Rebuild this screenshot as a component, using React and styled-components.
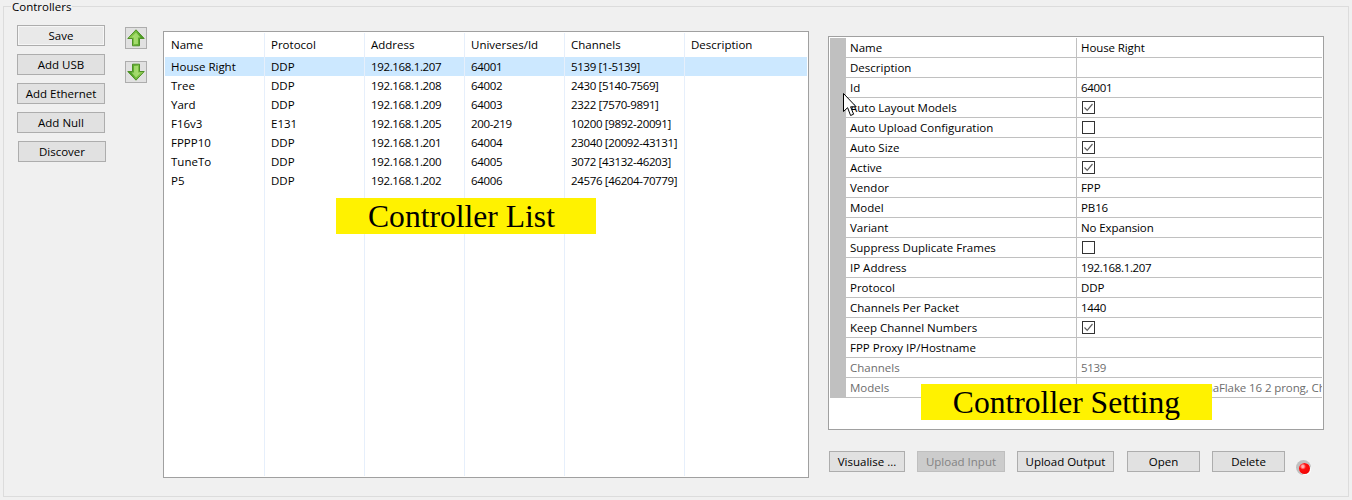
import React from 'react';
import styled, { createGlobalStyle } from 'styled-components';

const controllers = [
  ['House Right', 'DDP', '192.168.1.207', '64001', '5139 [1-5139]'],
  ['Tree', 'DDP', '192.168.1.208', '64002', '2430 [5140-7569]'],
  ['Yard', 'DDP', '192.168.1.209', '64003', '2322 [7570-9891]'],
  ['F16v3', 'E131', '192.168.1.205', '200-219', '10200 [9892-20091]'],
  ['FPPP10', 'DDP', '192.168.1.201', '64004', '23040 [20092-43131]'],
  ['TuneTo', 'DDP', '192.168.1.200', '64005', '3072 [43132-46203]'],
  ['P5', 'DDP', '192.168.1.202', '64006', '24576 [46204-70779]'],
];

const columns = [
  { title: 'Name', width: 100 },
  { title: 'Protocol', width: 100 },
  { title: 'Address', width: 100, numeric: true },
  { title: 'Universes/Id', width: 100, numeric: true },
  { title: 'Channels', width: 120, numeric: true },
  { title: 'Description', width: 122, last: true },
];

const settings = [
  ['Name', 'House Right'],
  ['Description', ''],
  ['Id', '64001'],
  ['Auto Layout Models', true],
  ['Auto Upload Configuration', false],
  ['Auto Size', true],
  ['Active', true],
  ['Vendor', 'FPP'],
  ['Model', 'PB16'],
  ['Variant', 'No Expansion'],
  ['Suppress Duplicate Frames', false],
  ['IP Address', '192.168.1.207'],
  ['Protocol', 'DDP'],
  ['Channels Per Packet', '1440'],
  ['Keep Channel Numbers', true],
  ['FPP Proxy IP/Hostname', ''],
  ['Channels', '5139', true],
  ['Models', 'Chroma Snow 17, ChromaFlake 16 2 prong, Chroma Snow', true],
];

function Arrow({ down }) {
  const id = down ? 'gd' : 'gu';
  const flip = down ? 'rotate(180 9 9)' : undefined;
  return (
    <ArrowButton>
      <svg width="18" height="18" viewBox="0 0 18 18">
        <defs>
          <linearGradient id={id} x1="0" y1="0" x2="1" y2="0">
            <stop offset="0" stopColor="#9bd35c" />
            <stop offset="0.5" stopColor="#6fb93a" />
            <stop offset="1" stopColor="#3a9218" />
          </linearGradient>
        </defs>
        <path
          transform={flip}
          d="M9 0.8 L17.2 9.5 L12.5 9.5 L12.5 16.8 L5.5 16.8 L5.5 9.5 L0.8 9.5 Z"
          fill={`url(#${id})`}
          stroke="#4d8f26"
          strokeWidth="1"
          strokeLinejoin="round"
        />
        <path
          transform={flip}
          d="M9 3.5 L13.5 8.5 L11 8.5 L11 15 L7 15 L7 8.5 L4.5 8.5 Z"
          fill="#c4f08c"
          opacity="0.6"
        />
      </svg>
    </ArrowButton>
  );
}

function Check({ on }) {
  return (
    <CheckBox>
      {on && (
        <svg width="11" height="11" viewBox="0 0 11 11">
          <path d="M1.5 5.5 L4.2 8.3 L9.5 2" fill="none" stroke="#5f5f5f" strokeWidth="1.2" />
        </svg>
      )}
    </CheckBox>
  );
}

export default function App() {
  return (
    <>
      <GlobalStyle />
      <Group>
        <Caption>Controllers</Caption>
        <SideButtons>
          <Button $primary>Save</Button>
          <Button>Add USB</Button>
          <Button>Add Ethernet</Button>
          <Button>Add Null</Button>
          <Button $nudge>Discover</Button>
        </SideButtons>
        <ArrowColumn>
          <Arrow />
          <Arrow down />
        </ArrowColumn>
        <ListBox>
          {columns.map((col, i) => (
            <Column key={col.title} $width={col.width} $last={col.last}>
              <HeaderCell>{col.title}</HeaderCell>
              {controllers.map((row, r) => (
                <Cell key={r} $selected={r === 0} $numeric={col.numeric}>{row[i]}</Cell>
              ))}
            </Column>
          ))}
          <Callout $left={172} $top={166} $width={260} $inset={9}>Controller List</Callout>
        </ListBox>
        <RightPanel>
          <PropertyGrid>
            {settings.map(([label, value, disabled]) => (
              <PropRow key={label}>
                <PropGutter />
                <PropName $disabled={disabled}>{label}</PropName>
                <PropValue $disabled={disabled} $numeric={/^[\d.]+$/.test(value)}>
                  {typeof value === 'boolean' ? <Check on={value} /> : value}
                </PropValue>
              </PropRow>
            ))}
            <Callout $left={92} $top={347} $width={291}>Controller Setting</Callout>
          </PropertyGrid>
          <ActionRow>
            <ActionButton $width={76}>Visualise ...</ActionButton>
            <ActionButton $width={88} disabled>Upload Input</ActionButton>
            <ActionButton $width={97}>Upload Output</ActionButton>
            <ActionButton $width={73} $gap={13}>Open</ActionButton>
            <ActionButton $width={73}>Delete</ActionButton>
            <Led />
          </ActionRow>
        </RightPanel>
        <Cursor width="16" height="25" viewBox="0 0 16 25">
          <path
            d="M0.5 0.5 L0.5 18.5 L4.6 14.7 L7.6 22.5 L10.6 21.2 L7.6 13.8 L13.2 13.8 Z"
            fill="#fff"
            stroke="#000"
            strokeWidth="1"
          />
        </Cursor>
      </Group>
    </>
  );
}

const GlobalStyle = createGlobalStyle`
  html, body {
    margin: 0;
    padding: 0;
    background: #f0f0f0;
    overflow: hidden;
  }
  body {
    font-family: "Open Sans", "Noto Sans", sans-serif;
    font-size: 11.5px;
    color: #000;
  }
`;

const Group = styled.div`
  position: relative;
  box-sizing: border-box;
  display: flex;
  align-items: flex-start;
  width: 1346px;
  height: 491px;
  margin: 6px 3px 0;
  padding: 18px 0 0 13px;
  border: 1px solid #dcdcdc;
`;

const Caption = styled.div`
  position: absolute;
  left: 7px;
  top: -8px;
  padding: 0 1px;
  background: #f0f0f0;
  line-height: 15px;
`;

const SideButtons = styled.div`
  display: flex;
  flex-direction: column;
  gap: 8px;
  width: 89px;
`;

const Button = styled.div`
  box-sizing: border-box;
  display: flex;
  align-items: center;
  justify-content: center;
  width: 88px;
  height: 21px;
  margin-left: ${props => (props.$nudge ? '1px' : '0')};
  border: 1px solid #adadad;
  background: ${props => (props.$primary ? '#e9e9e9' : '#e1e1e1')};
  box-shadow: ${props => (props.$primary ? 'inset 0 0 0 1px #f6f6f6' : 'none')};
`;

const ArrowColumn = styled.div`
  display: flex;
  flex-direction: column;
  gap: 12px;
  margin: 2px 16px 0 19px;
`;

const ArrowButton = styled.div`
  box-sizing: border-box;
  display: flex;
  align-items: center;
  justify-content: center;
  width: 22px;
  height: 22px;
  border: 1px solid #adadad;
  background: #e1e1e1;
`;

const ListBox = styled.div`
  position: relative;
  box-sizing: border-box;
  display: flex;
  width: 646px;
  height: 447px;
  margin-top: 6px;
  padding: 1px;
  border: 1px solid #a0a0a0;
  background: #fff;
`;

const Column = styled.div`
  box-sizing: border-box;
  width: ${props => props.$width}px;
  height: 100%;
  border-right: ${props => (props.$last ? 'none' : '1px solid #e6effb')};
`;

const HeaderCell = styled.div`
  box-sizing: border-box;
  display: flex;
  align-items: center;
  height: 24px;
  padding: 0 0 2px 6px;
  background: #fff;
`;

const Cell = styled.div`
  box-sizing: border-box;
  display: flex;
  align-items: center;
  height: 19px;
  padding-left: 6px;
  background: ${props => (props.$selected ? '#cce8ff' : 'transparent')};
  letter-spacing: ${props => (props.$numeric ? '-0.35px' : '0')};
  white-space: nowrap;
`;

const Callout = styled.div`
  position: absolute;
  box-sizing: border-box;
  left: ${props => props.$left}px;
  top: ${props => props.$top}px;
  width: ${props => props.$width}px;
  height: 36px;
  padding-right: ${props => props.$inset || 0}px;
  background: #fff200;
  color: #000;
  font-family: "Liberation Serif", serif;
  font-size: 31.6px;
  line-height: 38px;
  text-align: center;
  white-space: nowrap;
`;

const RightPanel = styled.div`
  display: flex;
  flex-direction: column;
  margin: 11px 0 0 19px;
`;

const PropertyGrid = styled.div`
  position: relative;
  box-sizing: border-box;
  width: 496px;
  height: 394px;
  padding: 1px;
  border: 1px solid #a0a0a0;
  background: #fff;
`;

const PropRow = styled.div`
  display: flex;
  height: 20px;
`;

const PropGutter = styled.div`
  flex: none;
  width: 16px;
  background: #c0c0c0;
`;

const PropName = styled.div`
  box-sizing: border-box;
  flex: none;
  display: flex;
  align-items: center;
  width: 231px;
  padding-left: 4px;
  border-right: 1px solid #c0c0c0;
  border-bottom: 1px solid #c0c0c0;
  color: ${props => (props.$disabled ? '#6d6d6d' : '#000')};
`;

const PropValue = styled.div`
  box-sizing: border-box;
  flex: 1;
  min-width: 0;
  display: flex;
  align-items: center;
  padding-left: 4px;
  border-bottom: 1px solid #c0c0c0;
  overflow: hidden;
  white-space: nowrap;
  letter-spacing: ${props => (props.$numeric ? '-0.35px' : '-0.1px')};
  color: ${props => (props.$disabled ? '#6d6d6d' : '#000')};
`;

const CheckBox = styled.div`
  box-sizing: border-box;
  display: flex;
  align-items: center;
  justify-content: center;
  width: 13px;
  height: 13px;
  margin-left: 1px;
  border: 1px solid #333;
  background: #fff;
`;

const ActionRow = styled.div`
  display: flex;
  align-items: flex-start;
  gap: 12px;
  margin: 21px 0 0 1px;
`;

const ActionButton = styled.div`
  box-sizing: border-box;
  display: flex;
  align-items: center;
  justify-content: center;
  width: ${props => props.$width}px;
  height: 21px;
  margin-left: ${props => (props.$gap ? `${props.$gap - 12}px` : '0')};
  border: 1px solid ${props => (props.disabled ? '#bfbfbf' : '#adadad')};
  background: ${props => (props.disabled ? '#cccccc' : '#e1e1e1')};
  color: ${props => (props.disabled ? '#838383' : '#000')};
`;

const Led = styled.div`
  flex: none;
  width: 11px;
  height: 11px;
  margin: 12px 0 0 2px;
  border-radius: 50%;
  background: radial-gradient(circle at 35% 32%, #ffb0b0 0 10%, #ff1010 30%, #e80000 100%);
  box-shadow: 1px 1px 0 0 #fff, -1px -1px 0 2px #c0c0c0;
`;

const Cursor = styled.svg`
  position: absolute;
  left: 839px;
  top: 86px;
`;
